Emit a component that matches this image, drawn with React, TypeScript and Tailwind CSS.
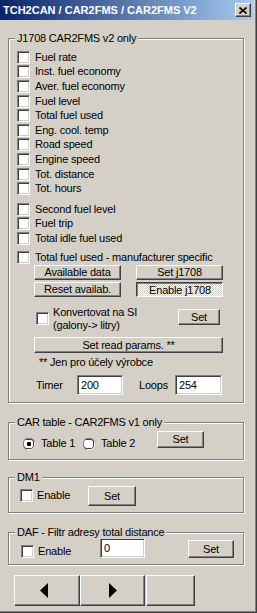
import React from 'react'

const raised = "bg-[#d4d0c8] border-t border-l border-b border-r border-t-white border-l-white border-b-[#404040] border-r-[#404040] shadow-[inset_-1px_-1px_0_#808080]"
const sunken = "border-t border-l border-b border-r border-t-[#808080] border-l-[#808080] border-b-white border-r-white shadow-[inset_1px_1px_0_#404040,inset_-1px_-1px_0_#d4d0c8]"

const Btn = ({ label, className = "" }: { label: string; className?: string }) => (
    <div className={`${raised} flex items-center justify-center leading-none ${className}`}>
        {label}
    </div>
)

const Check = () => <div className={`${sunken} w-[13px] h-[13px] bg-white shrink-0`} />

const Radio = ({ checked }: { checked?: boolean }) => (
    <svg width="12" height="12" viewBox="0 0 12 12" className="shrink-0">
        <path d="M4 0h4l2 1 1 1 1 2v4l-1 2-1 1-2 1H4l-2-1-1-1-1-2V4l1-2 1-1z" fill="#808080" />
        <path d="M4 1h4l2 1 0 0 1 2v4l-1 2-2 1H4l-2-1-1-2V4l1-2z" fill="#404040" />
        <path d="M4 11h4l2-1 1-2V4l1 0v4l-1 2-1 1-2 1H4z" fill="#fff" />
        <path d="M4 2h4l2 1 0 1v4l-1 2H3l-1-1-1-1V4l1-2z" fill="#fff" />
        {checked && <rect x="4" y="4" width="4" height="4" rx="1" fill="#000" />}
    </svg>
)

const Input = ({ value, className = "" }: { value: string; className?: string }) => (
    <div className={`${sunken} bg-white h-[20px] pl-[3px] flex items-center ${className}`}>{value}</div>
)

const Group = ({ label, className = "", children }: { label: string; className?: string; children: React.ReactNode }) => (
    <div className={`relative w-[236px] border border-[#808080] shadow-[inset_1px_1px_0_#fff,1px_1px_0_#fff] ${className}`}>
        <span className="absolute left-[6px] top-[-7px] px-[2px] bg-[#d4d0c8] leading-[13px]">{label}</span>
        {children}
    </div>
)

const Row = ({ label }: { label: string }) => (
    <div className="h-[14.6px] flex items-center gap-[5px]">
        <Check />
        <span className="leading-none">{label}</span>
    </div>
)

export default function App() {
    const block1 = ["Fuel rate", "Inst. fuel economy", "Aver. fuel economy", "Fuel level", "Total fuel used", "Eng. cool. temp", "Road speed", "Engine speed", "Tot. distance", "Tot. hours"]
    const block2 = ["Second fuel level", "Fuel trip", "Total idle fuel used"]

    return (
        <div className="w-[257px] h-[613px] bg-[#d4d0c8] border-r border-b border-[#404040] text-[11px] tracking-[-0.2px] text-black font-['Liberation_Sans',Arial,sans-serif]">
            <div className="h-full border-r border-b border-[#808080]">
                <div className="h-full pr-[2px] pb-[2px] flex flex-col">
                    {/* title bar */}
                    <div className="h-[20px] shrink-0 flex items-center justify-between pl-[3px] pr-[2px] bg-[linear-gradient(to_right,#0a246a,#a6caf0)]">
                        <span className="text-white font-bold tracking-normal text-[11px]">TCH2CAN / CAR2FMS / CAR2FMS V2</span>
                        <div className={`${raised} w-[16px] h-[14px] flex items-center justify-center`}>
                            <svg width="8" height="7" viewBox="0 0 8 7">
                                <path d="M0.5 0.5L7.5 6.5M7.5 0.5L0.5 6.5" stroke="#000" strokeWidth="1.6" />
                            </svg>
                        </div>
                    </div>

                    <div className="flex flex-col pl-[8px]">
                        <Group label="J1708 CAR2FMS  v2 only" className="mt-[18px] h-[365px] pl-[8px] pt-[11px]">
                            <div className="flex flex-col">
                                {block1.map((l) => <Row key={l} label={l} />)}
                            </div>
                            <div className="flex flex-col mt-[6px]">
                                {block2.map((l) => <Row key={l} label={l} />)}
                            </div>
                            <div className="mt-[4px]">
                                <Row label="Total fuel used - manufacturer specific" />
                            </div>
                            <div className="flex ml-[17px] mt-[1px] gap-[15px]">
                                <Btn label="Available data" className="w-[87px] h-[15px]" />
                                <Btn label="Set j1708" className="w-[87px] h-[15px]" />
                            </div>
                            <div className="flex ml-[17px] mt-[2px] gap-[15px]">
                                <Btn label="Reset availab." className="w-[87px] h-[15px]" />
                                <div className="w-[87px] h-[15px] flex items-center justify-center pt-[1px] pl-[1px] leading-none border-t border-l border-b border-r border-t-[#404040] border-l-[#404040] border-b-white border-r-white shadow-[inset_1px_1px_0_#808080] bg-[image:repeating-conic-gradient(#fff_0_25%,#d4d0c8_0_50%)] bg-[length:2px_2px]">
                                    Enable j1708
                                </div>
                            </div>
                            <div className="flex items-start ml-[19px] mt-[9px]">
                                <div className="w-[142px] flex items-start gap-[4px]">
                                    <div className="mt-[6px]"><Check /></div>
                                    <div className="leading-[13px]">
                                        <div>Konvertovat na SI</div>
                                        <div>(galony-&gt; litry)</div>
                                    </div>
                                </div>
                                <Btn label="Set" className="w-[42px] h-[16px] mt-[3px]" />
                            </div>
                            <Btn label="Set read params. **" className="ml-[17px] mt-[5px] w-[189px] h-[16px]" />
                            <div className="ml-[22px] mt-[2px] leading-[14px]">** Jen pro účely výrobce</div>
                            <div className="flex items-center ml-[19px] mt-[6px]">
                                <span className="w-[41px]">Timer</span>
                                <Input value="200" className="w-[46px]" />
                                <span className="w-[36px] ml-[16px]">Loops</span>
                                <Input value="254" className="w-[47px]" />
                            </div>
                        </Group>

                        <Group label="CAR table - CAR2FMS v1 only" className="mt-[19px] h-[38px] pl-[14px] pt-[8px]">
                            <div className="flex items-start">
                                <div className="w-[60px] flex items-center gap-[6px] mt-[6px] h-[13px]">
                                    <Radio checked />
                                    <span>Table 1</span>
                                </div>
                                <div className="w-[74px] flex items-center gap-[6px] mt-[6px] h-[13px]">
                                    <Radio />
                                    <span>Table 2</span>
                                </div>
                                <Btn label="Set" className="w-[47px] h-[17px]" />
                            </div>
                        </Group>

                        <Group label="DM1" className="mt-[17px] h-[36px] pl-[11px] pt-[8px]">
                            <div className="flex items-start">
                                <div className="w-[68px] flex items-center gap-[4px] mt-[3px] h-[13px]">
                                    <Check />
                                    <span>Enable</span>
                                </div>
                                <Btn label="Set" className="w-[48px] h-[20px]" />
                            </div>
                        </Group>

                        <Group label="DAF - Filtr adresy total distance" className="mt-[19px] h-[33px] pl-[12px] pt-[5px]">
                            <div className="flex items-start">
                                <div className="w-[79px] flex items-center gap-[4px] mt-[7px] h-[13px]">
                                    <Check />
                                    <span>Enable</span>
                                </div>
                                <Input value="0" className="w-[45px]" />
                                <Btn label="Set" className="w-[46px] h-[18px] ml-[43px] mt-[2px]" />
                            </div>
                        </Group>

                        <div className="flex mt-[10px] ml-[6px]">
                            <div className={`${raised} w-[66px] h-[31px] flex items-center justify-center pr-[7px]`}>
                                <svg width="8" height="15" viewBox="0 0 8 15"><polygon points="8,0 0,7.5 8,15" fill="#000" /></svg>
                            </div>
                            <div className={`${raised} w-[65px] h-[31px] flex items-center justify-center`}>
                                <svg width="8" height="15" viewBox="0 0 8 15"><polygon points="0,0 8,7.5 0,15" fill="#000" /></svg>
                            </div>
                            <div className={`${raised} w-[49px] h-[31px] ml-[1px]`} />
                        </div>
                    </div>
                </div>
            </div>
        </div>
    )
}
